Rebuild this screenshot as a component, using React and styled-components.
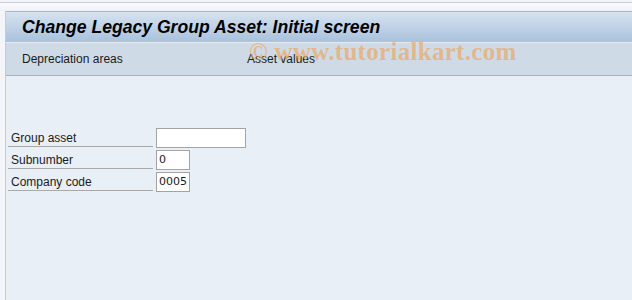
import React from 'react';
import styled, { createGlobalStyle } from 'styled-components';

const Global = createGlobalStyle`
  html, body { margin: 0; padding: 0; background: #f3f5f9; }
  body { font-family: "Liberation Sans", Arial, sans-serif; }
`;

const Page = styled.div`
  width: 632px;
  height: 300px;
  overflow: hidden;
  display: flex;
  flex-direction: column;
  background: #f3f5f9;
  position: relative;
`;

const TopStrip = styled.div`
  flex: none;
  border-top: 1px solid #c9cdd5;
  margin-top: 2px;
  box-sizing: border-box;
  height: 9px;
  background: linear-gradient(#fafbfd, #eef1f6);
`;

const Frame = styled.div`
  flex: 1;
  margin-left: 5px;
  border-left: 1px solid #c4ccd7;
  display: flex;
  flex-direction: column;
`;

const TitleBar = styled.div`
  height: 30px;
  border-top: 1px solid #aab6c4;
  background: linear-gradient(#d6e3f0, #a9c1dc);
  display: flex;
  align-items: center;
  padding-left: 16px;
  border-bottom: 1px solid #e4ebf3;
`;

const Title = styled.h1`
  margin: 0;
  font-size: 17.6px;
  font-weight: bold;
  font-style: italic;
  color: #000;
`;

const Toolbar = styled.div`
  height: 32px;
  background: #cedbe7;
  border-bottom: 1px solid #a7b2bf;
  display: flex;
  align-items: center;
  padding-left: 16px;
`;

const ToolItem = styled.span`
  font-size: 12px;
  color: #1a1a1a;
  width: ${p => p.w || 'auto'};
`;

const Content = styled.div`
  flex: 1;
  background: #e9eff7;
  padding: 49px 0 0 2px;
`;

const Row = styled.div`
  display: flex;
  align-items: flex-end;
  height: 22px;
`;

const Label = styled.label`
  width: 145px;
  margin-right: 3px;
  height: 19px;
  box-sizing: border-box;
  padding: 2px 0 0 3px;
  border-bottom: 1px solid #a9a9a9;
  font-size: 12px;
  line-height: 16px;
  color: #1a1a1a;
`;

const Field = styled.div`
  width: ${p => p.w}px;
  height: 20px;
  box-sizing: border-box;
  border: 1px solid #a3a3a3;
  background: #fff;
  font-family: "DejaVu Sans", Verdana, sans-serif;
  font-size: 11px;
  line-height: 18px;
  padding-left: 2px;
  color: #1a1a1a;
  margin-bottom: -1px;
`;

const Watermark = styled.div`
  position: absolute;
  left: 249px;
  top: 38px;
  font-family: "Liberation Serif", "Times New Roman", serif;
  font-size: 25px;
  font-weight: bold;
  color: rgba(236, 168, 100, 0.7);
  letter-spacing: 0.3px;
  pointer-events: none;
  white-space: nowrap;
`;

const rows = [
  { label: 'Group asset', w: 90, value: '' },
  { label: 'Subnumber', w: 34, value: '0' },
  { label: 'Company code', w: 34, value: '0005' },
];

export default function App() {
  return (
    <Page>
      <Global />
      <TopStrip />
      <Frame>
        <TitleBar>
          <Title>Change Legacy Group Asset: Initial screen</Title>
        </TitleBar>
        <Toolbar>
          <ToolItem w="225px">Depreciation areas</ToolItem>
          <ToolItem>Asset values</ToolItem>
        </Toolbar>
        <Content>
          {rows.map(r => (
            <Row key={r.label}>
              <Label>{r.label}</Label>
              <Field w={r.w}>{r.value}</Field>
            </Row>
          ))}
        </Content>
      </Frame>
      <Watermark>© www.tutorialkart.com</Watermark>
    </Page>
  );
}
